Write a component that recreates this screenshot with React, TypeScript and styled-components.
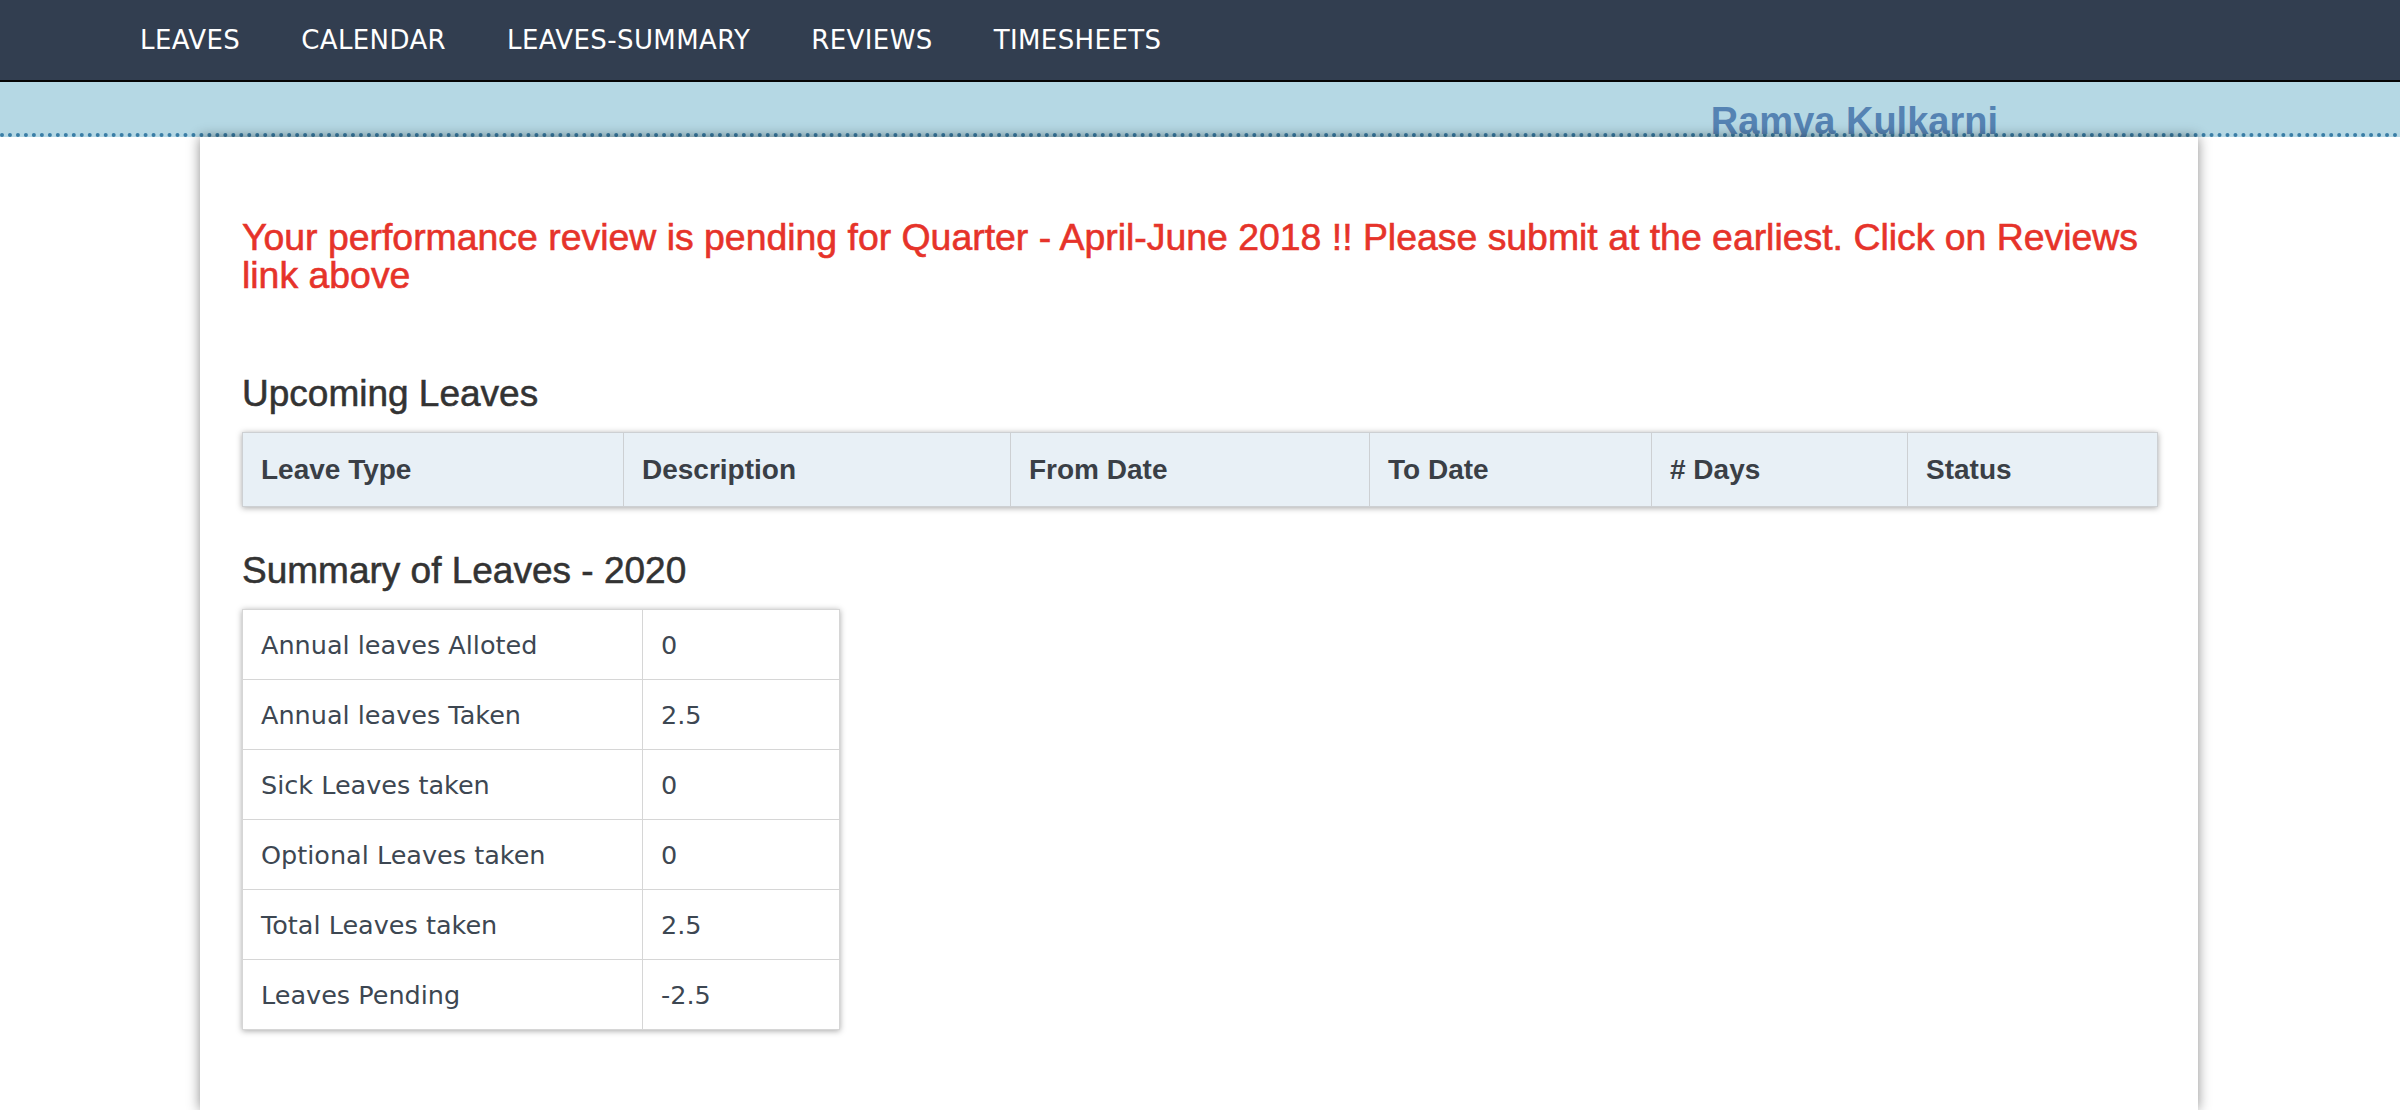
import React from "react";
import styled, { createGlobalStyle } from "styled-components";

const GlobalStyle = createGlobalStyle`
  html, body {
    margin: 0;
    padding: 0;
    background: #ffffff;
    overflow: hidden;
  }
  * { box-sizing: border-box; }
`;

const Page = styled.div`
  display: flex;
  flex-direction: column;
  min-height: 100vh;
  font-family: "Liberation Sans", Arial, sans-serif;
`;

const NavBar = styled.nav`
  height: 82px;
  background: #323e50;
  border-bottom: 2px solid #050505;
  display: flex;
  align-items: center;
  padding-left: 140px;
  gap: 61px;
`;

const NavLink = styled.a`
  font-family: "DejaVu Sans", Verdana, sans-serif;
  font-size: 26px;
  line-height: 80px;
  color: #ffffff;
  text-decoration: none;
  letter-spacing: 0.4px;
`;

const UserBand = styled.div`
  height: 55px;
  background: #b5d8e4;
  border-bottom: 4px dotted #3a7ea6;
  display: flex;
  justify-content: flex-end;
  padding: 20px 402px 0 0;
`;

const UserName = styled.div`
  font-family: "Liberation Sans", Arial, sans-serif;
  font-weight: 700;
  font-size: 38px;
  line-height: 38px;
  height: 38px;
  color: #5583b3;
  white-space: nowrap;
`;

const Card = styled.main`
  flex: 1;
  width: 1998px;
  margin-left: 200px;
  background: #ffffff;
  box-shadow: 0 0 12px rgba(0, 0, 0, 0.45);
  padding: 81px 41px 40px 42px;
`;

const Alert = styled.p`
  margin: 0;
  font-size: 37.4px;
  line-height: 38px;
  color: #e6332a;
  -webkit-text-stroke: 0.6px #e6332a;
`;

const SectionTitle = styled.h4<{ $top: number }>`
  margin: ${(p) => p.$top}px 0 18px;
  font-size: 37px;
  line-height: 41px;
  font-weight: 400;
  color: #333333;
  -webkit-text-stroke: 0.55px #333333;
`;

const LeavesTable = styled.table`
  width: 100%;
  table-layout: fixed;
  border-collapse: collapse;
  box-shadow: 0 1px 6px rgba(0, 0, 0, 0.35);
`;

const HeadCell = styled.th`
  height: 74px;
  padding: 0 18px;
  text-align: left;
  background: #e8f0f6;
  border: 1px solid #cdd0d3;
  font-family: "Liberation Sans", Arial, sans-serif;
  font-weight: 700;
  font-size: 28px;
  color: #3a3f46;
`;

const SummaryTable = styled.table`
  width: 597px;
  table-layout: fixed;
  border-collapse: collapse;
  box-shadow: 0 1px 6px rgba(0, 0, 0, 0.35);
`;

const Cell = styled.td`
  height: 70px;
  padding: 0 18px;
  border: 1px solid #d6d6d6;
  font-family: "DejaVu Sans", Verdana, sans-serif;
  font-size: 25.5px;
  color: #3d4752;
  vertical-align: middle;
`;

const navItems = ["LEAVES", "CALENDAR", "LEAVES-SUMMARY", "REVIEWS", "TIMESHEETS"];

const columns: { label: string; width: number }[] = [
  { label: "Leave Type", width: 381 },
  { label: "Description", width: 387 },
  { label: "From Date", width: 359 },
  { label: "To Date", width: 282 },
  { label: "# Days", width: 256 },
  { label: "Status", width: 250 },
];

const summary: [string, string][] = [
  ["Annual leaves Alloted", "0"],
  ["Annual leaves Taken", "2.5"],
  ["Sick Leaves taken", "0"],
  ["Optional Leaves taken", "0"],
  ["Total Leaves taken", "2.5"],
  ["Leaves Pending", "-2.5"],
];

export default function App() {
  return (
    <>
      <GlobalStyle />
      <Page>
        <NavBar>
          {navItems.map((item) => (
            <NavLink key={item} href="#">
              {item}
            </NavLink>
          ))}
        </NavBar>
        <UserBand>
          <UserName>Ramya Kulkarni</UserName>
        </UserBand>
        <Card>
          <Alert>
            Your performance review is pending for Quarter - April-June 2018 !! Please submit at the
            earliest. Click on Reviews link above
          </Alert>
          <SectionTitle $top={79}>Upcoming Leaves</SectionTitle>
          <LeavesTable>
            <colgroup>
              {columns.map((c) => (
                <col key={c.label} style={{ width: c.width }} />
              ))}
            </colgroup>
            <thead>
              <tr>
                {columns.map((c) => (
                  <HeadCell key={c.label}>{c.label}</HeadCell>
                ))}
              </tr>
            </thead>
          </LeavesTable>
          <SectionTitle $top={43}>Summary of Leaves - 2020</SectionTitle>
          <SummaryTable>
            <colgroup>
              <col style={{ width: 400 }} />
              <col style={{ width: 197 }} />
            </colgroup>
            <tbody>
              {summary.map(([label, value]) => (
                <tr key={label}>
                  <Cell>{label}</Cell>
                  <Cell>{value}</Cell>
                </tr>
              ))}
            </tbody>
          </SummaryTable>
        </Card>
      </Page>
    </>
  );
}
